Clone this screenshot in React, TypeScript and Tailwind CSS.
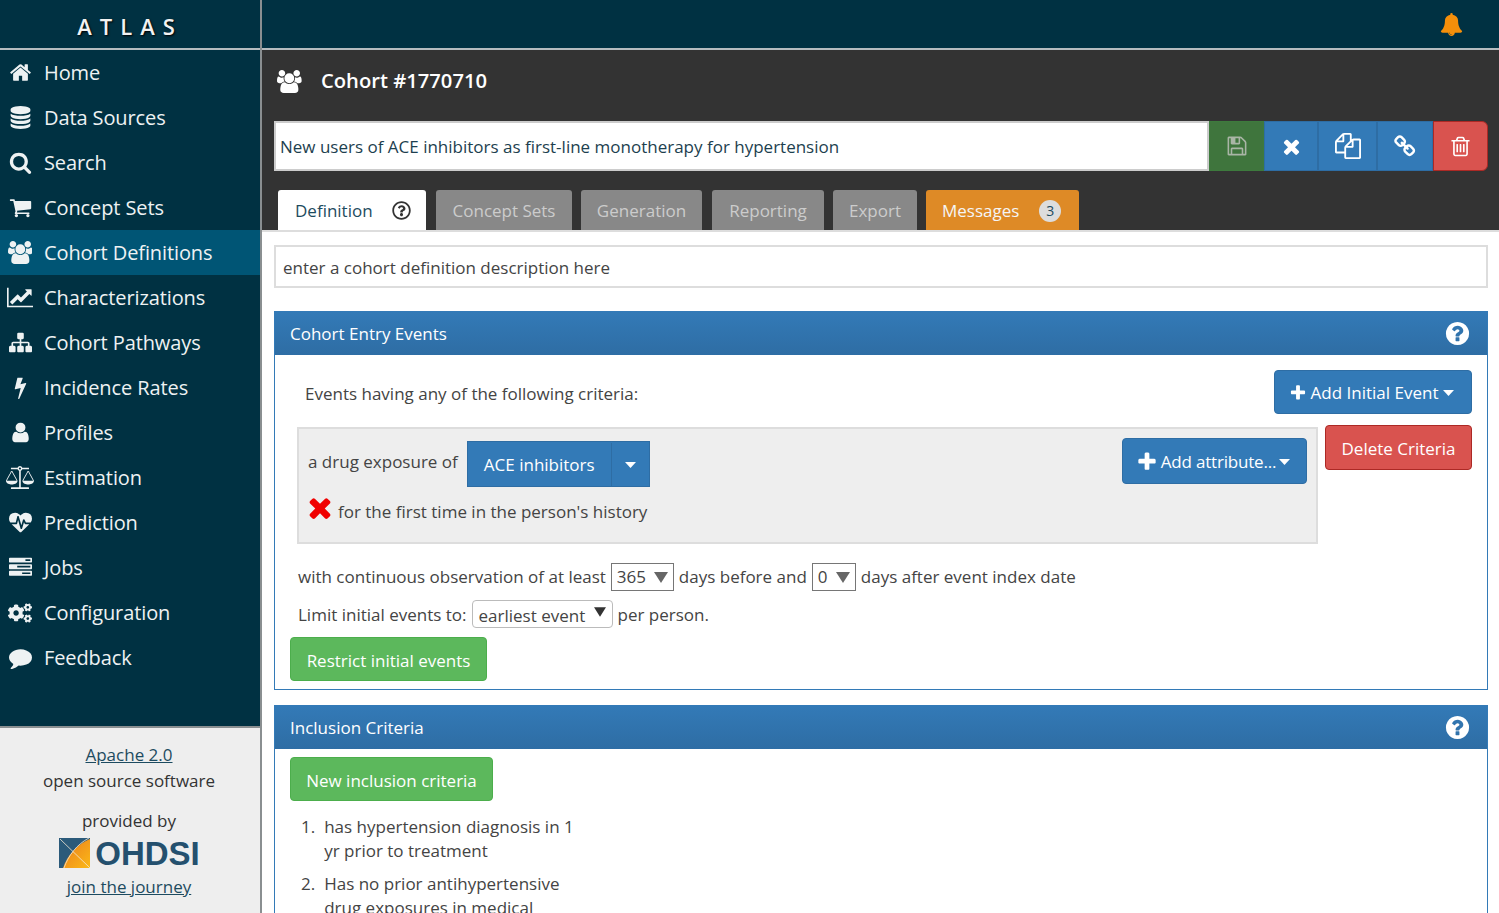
import type { ReactNode } from 'react';
import { FaCogs, FaRegQuestionCircle } from 'react-icons/fa';

// Font Awesome 4 outlines, the set the app uses
const fa = {
  home: 'M1472 992v480q0 26-19 45t-45 19h-384v-384h-256v384h-384q-26 0-45-19t-19-45v-480q0-1 .5-3t.5-3l575-474 575 474q1 2 1 6zm223-69l-62 74q-8 9-21 11h-3q-13 0-21-7l-692-577-692 577q-12 8-24 7-13-2-21-11l-62-74q-8-10-7-23.500t11-21.500l719-599q32-26 76-26t76 26l244 204v-195q0-14 9-23t23-9h192q14 0 23 9t9 23v408l219 182q10 8 11 21.500t-7 23.500z',
  database: 'M896 768q237 0 443-43t325-127v170q0 69-103 128t-280 93.500-385 34.500-385-34.500-280-93.500-103-128v-170q119 84 325 127t443 43zm0 768q237 0 443-43t325-127v170q0 69-103 128t-280 93.500-385 34.500-385-34.500-280-93.500-103-128v-170q119 84 325 127t443 43zm0-384q237 0 443-43t325-127v170q0 69-103 128t-280 93.500-385 34.500-385-34.500-280-93.500-103-128v-170q119 84 325 127t443 43zm0-1152q208 0 385 34.500t280 93.500 103 128v128q0 69-103 128t-280 93.500-385 34.500-385-34.500-280-93.500-103-128v-128q0-69 103-128t280-93.500 385-34.500z',
  search: 'M1216 832q0-185-131.500-316.500t-316.500-131.500-316.500 131.500-131.500 316.500 131.500 316.500 316.500 131.500 316.500-131.500 131.500-316.500zm512 832q0 52-38 90t-90 38q-54 0-90-38l-343-342q-179 124-399 124-143 0-273.500-55.500t-225-150-150-225-55.500-273.500 55.500-273.500 150-225 225-150 273.500-55.500 273.500 55.500 225 150 150 225 55.500 273.500q0 220-124 399l343 343q37 37 37 90z',
  cart: 'M704 1536q0 52-38 90t-90 38-90-38-38-90 38-90 90-38 90 38 38 90zm896 0q0 52-38 90t-90 38-90-38-38-90 38-90 90-38 90 38 38 90zm128-1088v512q0 24-16.500 42.500t-40.500 21.500l-1044 122q13 60 13 70 0 16-24 64h920q26 0 45 19t19 45-19 45-45 19h-1024q-26 0-45-19t-19-45q0-11 8-31.500t16-36 21.500-40 15.500-29.500l-177-823h-204q-26 0-45-19t-19-45 19-45 45-19h256q16 0 28.500 6.500t19.500 15.500 13 24.500 8 26 5.500 29.500 4.500 26h1201q26 0 45 19t19 45z',
  users: 'M593 896q-162 5-265 128h-134q-82 0-138-40.500t-56-118.500q0-353 124-353 6 0 43.500 21t97.500 42.500 119 21.500q67 0 133-23-5 37-5 66 0 139 81 256zm1071 637q0 120-73 189.500t-194 69.500h-874q-121 0-194-69.500t-73-189.500q0-53 3.500-103.500t14-109 26.500-108.500 43-97.500 62-81 85.500-53.500 111.500-20q10 0 43 21.500t73 48 107 48 135 21.500 135-21.500 107-48 73-48 43-21.500q61 0 111.500 20t85.500 53.500 62 81 43 97.500 26.500 108.500 14 109 3.500 103.500zm-1024-1277q0 106-75 181t-181 75-181-75-75-181 75-181 181-75 181 75 75 181zm704 384q0 159-112.500 271.500t-271.500 112.500-271.500-112.500-112.500-271.500 112.500-271.500 271.500-112.500 271.500 112.500 112.500 271.500zm576 225q0 78-56 118.500t-138 40.500h-134q-103-123-265-128 81-117 81-256 0-29-5-66 66 23 133 23 59 0 119-21.500t97.500-42.500 43.500-21q124 0 124 353zm-128-609q0 106-75 181t-181 75-181-75-75-181 75-181 181-75 181 75 75 181z',
  chart: 'M2048 1536v128h-2048v-1536h128v1408h1920zm-128-1248v435q0 21-19.500 29.500t-35.500-7.500l-121-121-633 633q-10 10-23 10t-23-10l-233-233-416 416-192-192 585-585q10-10 23-10t23 10l233 233 464-464-121-121q-16-16-7.500-35.500t29.500-19.500h435q14 0 23 9t9 23z',
  sitemap: 'M1792 1248v320q0 40-28 68t-68 28h-320q-40 0-68-28t-28-68v-320q0-40 28-68t68-28h96v-192h-512v192h96q40 0 68 28t28 68v320q0 40-28 68t-68 28h-320q-40 0-68-28t-28-68v-320q0-40 28-68t68-28h96v-192h-512v192h96q40 0 68 28t28 68v320q0 40-28 68t-68 28h-320q-40 0-68-28t-28-68v-320q0-40 28-68t68-28h96v-192q0-52 38-90t90-38h512v-192h-96q-40 0-68-28t-28-68v-320q0-40 28-68t68-28h320q40 0 68 28t28 68v320q0 40-28 68t-68 28h-96v192h512q52 0 90 38t38 90v192h96q40 0 68 28t28 68z',
  bolt: 'M1333 566q18 20 7 44l-540 1157q-13 25-42 25-4 0-14-2-17-5-25.500-19t-4.500-30l197-808-406 101q-4 1-12 1-18 0-31-11-18-15-13-39l201-825q4-14 16-23t28-9h328q19 0 32 12.500t13 29.500q0 8-5 18l-171 463 396-98q8-2 12-2 19 0 34 15z',
  user: 'M1536 1399q0 109-62.500 187t-150.500 78h-854q-88 0-150.500-78t-62.500-187q0-85 8.500-160.500t31.500-152 58.500-131 94-89 134.500-34.500q131 128 313 128t313-128q76 0 134.500 34.500t94 89 58.500 131 31.500 152 8.500 160.500zm-256-887q0 159-112.500 271.500t-271.500 112.500-271.500-112.500-112.500-271.500 112.500-271.500 271.500-112.500 271.500 112.500 112.500 271.500z',
  scale: 'M1728 448l-384 704h768zm-1280 0l-384 704h768zm821-192q-14 40-45.500 71.500t-71.500 45.500v1291h608q14 0 23 9t9 23v64q0 14-9 23t-23 9h-1344q-14 0-23-9t-9-23v-64q0-14 9-23t23-9h608v-1291q-40-14-71.500-45.500t-45.500-71.500h-491q-14 0-23-9t-9-23v-64q0-14 9-23t23-9h491q21-57 70-92.500t111-35.500 111 35.500 70 92.500h491q14 0 23 9t9 23v64q0 14-9 23t-23 9h-491zm-181 16q33 0 56.500-23.500t23.500-56.500-23.500-56.500-56.500-23.500-56.500 23.500-23.500 56.500 23.500 56.500 56.500 23.500zm1088 880q0 73-46.500 131t-117.500 91-144.500 49.500-139.500 16.500-139.500-16.500-144.500-49.500-117.500-91-46.500-131q0-11 35-81t92-174.500 107-195.500 102-184 56-100q18-33 56-33t56 33q4 7 56 100t102 184 107 195.500 92 174.500 35 81zm-1280 0q0 73-46.500 131t-117.500 91-144.500 49.500-139.500 16.500-139.500-16.500-144.500-49.500-117.500-91-46.500-131q0-11 35-81t92-174.500 107-195.500 102-184 56-100q18-33 56-33t56 33q4 7 56 100t102 184 107 195.500 92 174.500 35 81z',
  heartbeat: 'M1280 1024h305q-5 6-10 10.500t-9 7.500l-3 4-623 600q-18 18-44 18t-44-18l-624-602q-5-2-21-20h369q22 0 39.500-13.500t22.500-34.500l70-281 190 667q6 20 23 33t39 13q21 0 38-13t23-33l146-485 56 112q18 35 57 35zm512-428q0 145-103 300h-369l-111-221q-8-17-25.500-27t-36.500-8q-45 5-56 46l-129 430-196-686q-6-20-23.500-33t-39.500-13-39 13.500-22 34.500l-116 464h-423q-103-155-103-300 0-220 127-344t351-124q62 0 126.500 21.500t120 58 95.500 68.500 76 68q36-36 76-68t95.500-68.500 120-58 126.500-21.500q224 0 351 124t127 344z',
  tasks: 'M1024 1408h640v-128h-640v128zm-384-512h1024v-128h-1024v128zm640-512h384v-128h-384v128zm512 832v256q0 26-19 45t-45 19h-1664q-26 0-45-19t-19-45v-256q0-26 19-45t45-19h1664q26 0 45 19t19 45zm0-512v256q0 26-19 45t-45 19h-1664q-26 0-45-19t-19-45v-256q0-26 19-45t45-19h1664q26 0 45 19t19 45zm0-512v256q0 26-19 45t-45 19h-1664q-26 0-45-19t-19-45v-256q0-26 19-45t45-19h1664q26 0 45 19t19 45z',
  comment: 'M1792 896q0 174-120 321.500t-326 233-450 85.500q-70 0-145-8-198 175-460 242-49 14-114 22-17 2-30.500-9t-17.500-29v-1q-3-4-.5-12t2-10 4.500-9.500l6-9 7-8.500 8-9q7-8 31-34.500t34.500-38 31-39.500 32.500-51 27-59 26-76q-157-89-247.500-220t-90.500-281q0-130 71-248.500t191-204.500 286-136.500 348-50.500q244 0 450 85.500t326 233 120 321.500z',
  save: 'M512 1536h768v-384h-768v384zm896 0h128v-896q0-14-10-38.500t-20-34.500l-281-281q-10-10-34-20t-39-10v416q0 40-28 68t-68 28h-576q-40 0-68-28t-28-68v-416h-128v1280h128v-416q0-40 28-68t68-28h832q40 0 68 28t28 68v416zm-384-928v-320q0-13-9.500-22.500t-22.500-9.500h-192q-13 0-22.500 9.500t-9.500 22.500v320q0 13 9.500 22.500t22.500 9.500h192q13 0 22.500-9.500t9.500-22.500zm640 32v928q0 40-28 68t-68 28h-1344q-40 0-68-28t-28-68v-1344q0-40 28-68t68-28h928q40 0 88 20t76 48l280 280q28 28 48 76t20 88z',
  times: 'M1490 1322q0 40-28 68l-136 136q-28 28-68 28t-68-28l-294-294-294 294q-28 28-68 28t-68-28l-136-136q-28-28-28-68t28-68l294-294-294-294q-28-28-28-68t28-68l136-136q28-28 68-28t68 28l294 294 294-294q28-28 68-28t68 28l136 136q28 28 28 68t-28 68l-294 294 294 294q28 28 28 68z',
  files: 'M1696 384q40 0 68 28t28 68v1216q0 40-28 68t-68 28h-960q-40 0-68-28t-28-68v-288h-544q-40 0-68-28t-28-68v-672q0-40 20-88t48-76l408-408q28-28 76-48t88-20h416q40 0 68 28t28 68v328q68-40 128-40h416zm-544 213l-299 299h299v-299zm-640-384l-299 299h299v-299zm196 647l316-316v-416h-384v416q0 40-28 68t-68 28h-416v640h512v-256q0-40 20-88t48-76zm956 804v-1152h-384v416q0 40-28 68t-68 28h-416v640h896z',
  link: 'M1456 1216q0-40-28-68l-208-208q-28-28-68-28-42 0-72 32 3 3 19 18.500t21.500 21.500 15 19 13 25.500 3.500 27.500q0 40-28 68t-68 28q-15 0-27.500-3.500t-25.500-13-19-15-21.500-21.500-18.500-19q-33 31-33 73 0 40 28 68l206 207q27 27 68 27 40 0 68-26l147-146q28-28 28-67zm-703-705q0-40-28-68l-206-207q-28-28-68-28-39 0-68 27l-147 146q-28 28-28 67 0 40 28 68l208 208q27 27 68 27 42 0 72-31-3-3-19-18.500t-21.500-21.500-15-19-13-25.500-3.500-27.500q0-40 28-68t68-28q15 0 27.500 3.500t25.500 13 19 15 21.500 21.500 18.500 19q33-31 33-73zm895 705q0 120-85 203l-147 146q-83 83-203 83-121 0-204-85l-206-207q-83-83-83-203 0-123 88-209l-88-88q-86 88-208 88-120 0-204-84l-208-208q-84-84-84-204t85-203l147-146q83-83 203-83 121 0 204 85l206 207q83 83 83 203 0 123-88 209l88 88q86-88 208-88 120 0 204 84l208 208q84 84 84 204z',
  trash: 'M704 736v576q0 14-9 23t-23 9h-64q-14 0-23-9t-9-23v-576q0-14 9-23t23-9h64q14 0 23 9t9 23zm256 0v576q0 14-9 23t-23 9h-64q-14 0-23-9t-9-23v-576q0-14 9-23t23-9h64q14 0 23 9t9 23zm256 0v576q0 14-9 23t-23 9h-64q-14 0-23-9t-9-23v-576q0-14 9-23t23-9h64q14 0 23 9t9 23zm128 724v-948h-896v948q0 22 7 40.500t14.500 27 10.500 8.500h832q3 0 10.500-8.500t14.500-27 7-40.500zm-672-1076h448l-48-117q-7-9-17-11h-317q-10 2-17 11zm928 32v64q0 14-9 23t-23 9h-96v948q0 83-47 143.500t-113 60.500h-832q-66 0-113-58.500t-47-141.500v-952h-96q-14 0-23-9t-9-23v-64q0-14 9-23t23-9h309l70-167q15-37 54-63t79-26h320q40 0 79 26t54 63l70 167h309q14 0 23 9t9 23z',
  plus: 'M1600 736v192q0 40-28 68t-68 28h-416v416q0 40-28 68t-68 28h-192q-40 0-68-28t-28-68v-416h-416q-40 0-68-28t-28-68v-192q0-40 28-68t68-28h416v-416q0-40 28-68t68-28h192q40 0 68 28t28 68v416h416q40 0 68 28t28 68z',
  question: 'M1024 1376v-192q0-14-9-23t-23-9h-192q-14 0-23 9t-9 23v192q0 14 9 23t23 9h192q14 0 23-9t9-23zm256-672q0-88-55.500-163t-138.500-116-170-41q-243 0-371 213-15 24 8 42l132 100q7 6 19 6 16 0 25-12 53-68 86-92 34-24 86-24 48 0 85.500 26t37.500 59q0 38-20 61t-68 45q-63 28-115.500 86.500t-52.500 125.500v36q0 14 9 23t23 9h192q14 0 23-9t9-23q0-19 21.500-49.500t54.500-49.500q32-18 49-28.500t46-35 44.500-48 28-60.500 12.500-81zm384 192q0 209-103 385.500t-279.500 279.500-385.500 103-385.500-103-279.500-279.500-103-385.500 103-385.500 279.500-279.500 385.500-103 385.500 103 279.500 279.500 103 385.500z',
  bell: 'M912 1696q0-16-16-16-59 0-101.500-42.500t-42.500-101.500q0-16-16-16t-16 16q0 73 51.500 124.500t124.500 51.500q16 0 16-16zm816-288q0 52-38 90t-90 38h-448q0 106-75 181t-181 75-181-75-75-181h-448q-52 0-90-38t-38-90q50-42 91-88t85-119.500 74.500-158.500 50-206 19.500-260q0-152 117-282.500t307-158.500q-8-19-8-39 0-40 28-68t68-28 68 28 28 68q0 20-8 39 190 28 307 158.500t117 282.500q0 139 19.500 260t50 206 74.500 158.500 85 119.500 91 88z',
};

const Fa = ({ d, size = 23, vb = 1792, className }: { d: string; size?: number; vb?: number; className?: string }) => (
  <svg width={(vb / 1792) * size} height={size} viewBox={`0 0 ${vb} 1792`} fill="currentColor" className={className}>
    <path d={d} />
  </svg>
);

const navItems = [
  { label: 'Home', icon: <Fa d={fa.home} /> },
  { label: 'Data Sources', icon: <Fa d={fa.database} /> },
  { label: 'Search', icon: <Fa d={fa.search} /> },
  { label: 'Concept Sets', icon: <Fa d={fa.cart} /> },
  { label: 'Cohort Definitions', icon: <Fa d={fa.users} vb={1920} />, active: true },
  { label: 'Characterizations', icon: <Fa d={fa.chart} vb={2048} /> },
  { label: 'Cohort Pathways', icon: <Fa d={fa.sitemap} /> },
  { label: 'Incidence Rates', icon: <Fa d={fa.bolt} /> },
  { label: 'Profiles', icon: <Fa d={fa.user} /> },
  { label: 'Estimation', icon: <Fa d={fa.scale} vb={2176} /> },
  { label: 'Prediction', icon: <Fa d={fa.heartbeat} /> },
  { label: 'Jobs', icon: <Fa d={fa.tasks} /> },
  { label: 'Configuration', icon: <FaCogs size={24} /> },
  { label: 'Feedback', icon: <Fa d={fa.comment} /> },
];

const tabs = [
  { label: 'Concept Sets', className: 'ml-[10px] w-[136px]' },
  { label: 'Generation', className: 'ml-[9px] w-[121px]' },
  { label: 'Reporting', className: 'ml-[10px] w-[112px]' },
  { label: 'Export', className: 'ml-[9px] w-[84px]' },
];

const Caret = () => (
  <svg width={11} height={6} viewBox="0 0 11 6" fill="currentColor">
    <polygon points="0,0 11,0 5.500,6" />
  </svg>
);

const Btn = ({ className, children }: { className: string; children: ReactNode }) => (
  <div className={`flex items-center justify-center rounded border pt-[2px] text-white ${className}`}>{children}</div>
);

const PanelHeader = ({ title }: { title: string }) => (
  <div className="flex h-[43px] items-center justify-between bg-gradient-to-b from-[#337ab7] to-[#2e6da4] pl-[15px] pr-[16px] text-[17px] text-white">
    <span>{title}</span>
    <Fa d={fa.question} size={27} />
  </div>
);

const OhdsiMark = () => (
  <svg width="31" height="30" viewBox="0 0 31 30">
    <defs>
      <linearGradient id="orange" x1="0" y1="0" x2="1" y2="1">
        <stop offset="0" stopColor="#ea7a1e" />
        <stop offset="1" stopColor="#fbb917" />
      </linearGradient>
    </defs>
    <rect width="31" height="30" fill="#2b5a7a" />
    <path d="M4 30 C8 18 18 6 31 1 V30 Z" fill="url(#orange)" />
    <path d="M1 1 L31 30 M5 30 C9 18 18 6 30 0" stroke="#f4e8d4" strokeWidth="0.8" fill="none" />
  </svg>
);

const Select = ({ value, className, arrow }: { value: string; className: string; arrow: ReactNode }) => (
  <span className={`mx-[5px] flex h-[28px] items-center justify-between border bg-white ${className}`}>
    <span>{value}</span>
    {arrow}
  </span>
);

const GrayArrow = () => (
  <svg width="14" height="11" viewBox="0 0 14 11" className="text-[#666]" fill="currentColor">
    <polygon points="0,0 14,0 7,11" />
  </svg>
);

const App = () => {
  return (
    <div className="flex h-screen w-full overflow-hidden bg-white font-['Open_Sans',sans-serif] text-[17px] text-[#444]">
      <aside className="flex w-[262px] shrink-0 flex-col border-r-2 border-[#8a8f91] bg-[#003142]">
        <div className="flex h-[50px] shrink-0 items-center justify-center border-b-2 border-[#b5bcbf] pt-[4px] text-[22px] font-semibold tracking-[8px] text-[#f2f2f2] [text-shadow:1px_1px_2px_#000]">
          ATLAS
        </div>
        <nav className="flex-1">
          {navItems.map((item) => (
            <div
              key={item.label}
              className={`flex h-[45px] items-center text-[20px] tracking-[-0.1px] text-[#eef2f3] ${item.active ? 'bg-[#005575]' : ''}`}
            >
              <span className="flex w-[44px] shrink-0 justify-center pr-[4px]">{item.icon}</span>
              <span>{item.label}</span>
            </div>
          ))}
        </nav>
        <div className="flex h-[187px] shrink-0 flex-col items-center border-t-2 border-[#8a8f91] bg-[#eeeeee] pr-[2px] pt-[14px] text-[#333]">
          <a className="h-[26px] leading-[26px] text-[#1d4b60] underline">Apache 2.0</a>
          <div className="h-[26px] leading-[26px]">open source software</div>
          <div className="mt-[14px] h-[26px] leading-[26px]">provided by</div>
          <div className="mt-[3px] flex h-[32px] items-center gap-[5px] pl-[1px]">
            <OhdsiMark />
            <span className="font-['Liberation_Sans',sans-serif] text-[33px] font-bold leading-none text-[#24506e]">OHDSI</span>
          </div>
          <a className="mt-[5px] h-[26px] leading-[26px] text-[#1d4b60] underline">join the journey</a>
        </div>
      </aside>

      <main className="flex min-w-0 flex-1 flex-col">
        <div className="flex h-[50px] shrink-0 items-center justify-end border-b-2 border-[#b5bcbf] bg-[#003142] pr-[36px] pt-[1px] text-[#f58f0a]">
          <Fa d={fa.bell} size={23} />
        </div>

        <div className="flex h-[180px] shrink-0 flex-col bg-[#333333] pl-[12px] pr-[11px]">
          <div className="flex h-[62px] shrink-0 items-center text-white">
            <span className="flex w-[47px] justify-start pl-[3px]"><Fa d={fa.users} vb={1920} /></span>
            <span className="pb-[2px] text-[20.2px] font-semibold">Cohort #1770710</span>
          </div>
          <div className="mt-[9px] flex h-[50px] shrink-0">
            <div className="flex flex-1 items-center border-2 border-[#ccc] bg-white pl-[4px] pt-[1px] text-[#1d3f4f]">
              New users of ACE inhibitors as first-line monotherapy for hypertension
            </div>
            <div className="flex w-[55px] items-center justify-center border border-[#3d7a3d] bg-[#3f753d] text-[#a9b5a6]"><Fa d={fa.save} size={22} /></div>
            <div className="flex w-[54px] items-center justify-center border border-[#2e6da4] bg-[#337ab7] text-white"><Fa d={fa.times} /></div>
            <div className="flex w-[59px] items-center justify-center border border-[#2e6da4] bg-[#337ab7] text-white"><Fa d={fa.files} size={26} /></div>
            <div className="flex w-[56px] items-center justify-center border border-[#2e6da4] bg-[#337ab7] text-white"><Fa d={fa.link} /></div>
            <div className="flex w-[55px] items-center justify-center rounded-r-md border border-[#ac2925] bg-[#d9534f] text-white"><Fa d={fa.trash} /></div>
          </div>
          <div className="ml-[4px] mt-[19px] flex h-[40px] shrink-0 text-[#ccc]">
            <div className="flex w-[148px] items-center justify-between rounded-t-[3px] bg-white pl-[17px] pr-[15px] pt-[1px] text-[#1d4b60]">
              <span>Definition</span>
              <FaRegQuestionCircle size={19} className="text-[#333]" />
            </div>
            {tabs.map((tab) => (
              <div key={tab.label} className={`flex items-center justify-center rounded-t-[3px] bg-[#888888] pt-[1px] ${tab.className}`}>
                {tab.label}
              </div>
            ))}
            <div className="ml-[9px] flex w-[153px] items-center gap-[20px] rounded-t-[3px] bg-[#de8a26] pl-[16px] pt-[1px] text-[#f5f5f5]">
              <span>Messages</span>
              <span className="flex size-[22px] items-center justify-center rounded-full bg-[#ddd] text-[14px] text-[#1d4b60]">3</span>
            </div>
          </div>
        </div>

        <div className="min-h-0 flex-1 border-t-2 border-[#ddd] pl-[12px] pr-[11px] pt-[13px]">
          <div className="flex h-[43px] items-center border-2 border-[#ddd] pl-[7px] pt-[3px]">enter a cohort definition description here</div>

          <section className="mt-[23px] h-[379px] border border-[#337ab7]">
            <PanelHeader title="Cohort Entry Events" />
            <div className="px-[15px] pt-[15px]">
              <div className="flex items-center justify-between">
                <span className="pl-[15px] pt-[4px]">Events having any of the following criteria:</span>
                <Btn className="h-[44px] w-[198px] gap-[4px] border-[#2e6da4] bg-[#337ab7] pr-[3px]">
                  <Fa d={fa.plus} size={18} />
                  <span className="mr-[1px]">Add Initial Event</span>
                  <Caret />
                </Btn>
              </div>
              <div className="mt-[11px] flex items-start gap-[7px] pl-[7px]">
                <div className="mt-[2px] flex h-[117px] w-[1021px] justify-between border-2 border-[#ddd] bg-[#eeeeee] pl-[9px] pr-[9px] pt-[12px]">
                  <div>
                    <div className="flex items-center gap-[9px]">
                      <span className="pb-[4px]">a drug exposure of</span>
                      <div className="flex h-[46px] border border-[#2e6da4] bg-[#337ab7] pt-[1px] text-white">
                        <span className="flex w-[144px] items-center justify-center border-r border-[#2e6da4]">ACE inhibitors</span>
                        <span className="flex w-[37px] items-center justify-center"><Caret /></span>
                      </div>
                    </div>
                    <div className="mt-[9px] flex items-start gap-[7px] pl-[1px]">
                      <svg width="22" height="23" viewBox="302 238 1188 1316" fill="currentColor" className="text-[#f00000]">
                        <path d={fa.times} />
                      </svg>
                      <span className="pt-[3px]">for the first time in the person's history</span>
                    </div>
                  </div>
                  <Btn className="-mt-[3px] h-[46px] w-[185px] gap-[3px] border-[#2e6da4] bg-[#337ab7] pr-[3px] tracking-[-0.2px]">
                    <Fa d={fa.plus} size={22} />
                    <span>Add attribute...</span>
                    <Caret />
                  </Btn>
                </div>
                <Btn className="h-[45px] w-[147px] border-[#ac2925] bg-[#d9534f]">Delete Criteria</Btn>
              </div>
              <div className="mt-[18px] flex h-[30px] items-center pl-[8px]">
                <span>with continuous observation of at least</span>
                <Select value="365" className="w-[63px] border-[#767676] px-[5px]" arrow={<GrayArrow />} />
                <span>days before and</span>
                <Select value="0" className="w-[44px] border-[#767676] px-[5px]" arrow={<GrayArrow />} />
                <span>days after event index date</span>
              </div>
              <div className="mt-[8px] flex h-[30px] items-center pl-[8px]">
                <span>Limit initial events to:</span>
                <Select
                  value="earliest event"
                  className="-mt-[2px] w-[141px] rounded-sm border-[#bbb] pl-[6px] pr-[6px] pt-[3px]"
                  arrow={
                    <svg width="12" height="10" viewBox="0 0 14 11" className="mb-[8px] text-[#333]" fill="currentColor">
                      <polygon points="0,0 14,0 7,11" />
                    </svg>
                  }
                />
                <span>per person.</span>
              </div>
              <Btn className="mt-[7px] h-[44px] w-[197px] border-[#4cae4c] bg-[#5cb85c] pt-[3px]">Restrict initial events</Btn>
            </div>
          </section>

          <section className="mt-[15px] h-[300px] border border-[#337ab7]">
            <PanelHeader title="Inclusion Criteria" />
            <div className="px-[15px] pt-[8px]">
              <Btn className="h-[44px] w-[203px] border-[#4cae4c] bg-[#5cb85c] pt-[3px]">New inclusion criteria</Btn>
              <ol className="mt-[14px] w-[300px] pl-[11px] leading-[24px]">
                <li className="flex gap-[9px]"><span>1.</span><span>has hypertension diagnosis in 1<br />yr prior to treatment</span></li>
                <li className="mt-[9px] flex gap-[9px]"><span>2.</span><span>Has no prior antihypertensive<br />drug exposures in medical</span></li>
              </ol>
            </div>
          </section>
        </div>
      </main>
    </div>
  );
};

export default App;
